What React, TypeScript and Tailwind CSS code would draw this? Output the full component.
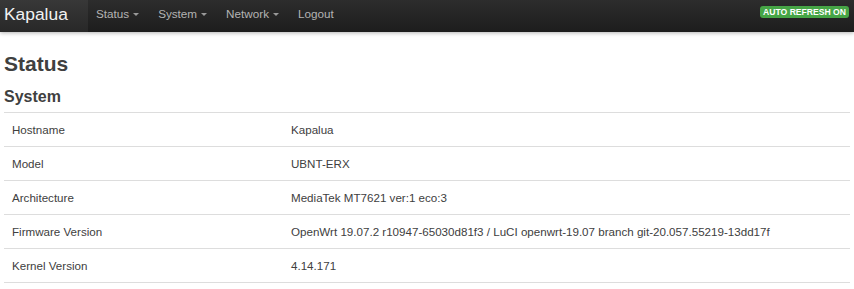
import { ReactNode } from 'react';

const rows: [string, string][] = [
  ['Hostname', 'Kapalua'],
  ['Model', 'UBNT-ERX'],
  ['Architecture', 'MediaTek MT7621 ver:1 eco:3'],
  ['Firmware Version', 'OpenWrt 19.07.2 r10947-65030d81f3 / LuCI openwrt-19.07 branch git-20.057.55219-13dd17f'],
  ['Kernel Version', '4.14.171'],
];

function NavLink({ children, caret = false }: { children: ReactNode; caret?: boolean }) {
  return (
    <a className="flex items-center h-full pb-[4px] pl-[8px] pr-[11px] text-[11.7px] text-[#b3b3b3] cursor-pointer">
      {children}
      {caret && (
        <span className="ml-[4px] mt-[1px] w-0 h-0 border-l-[3px] border-r-[3px] border-t-[3.5px] border-l-transparent border-r-transparent border-t-[#999]" />
      )}
    </a>
  );
}

export default function App() {
  return (
    <div className="min-h-screen bg-white font-['Liberation_Sans',Arial,sans-serif] text-[#404040]">
      {/* Top bar */}
      <nav className="flex items-center h-[32px] bg-gradient-to-b from-[#2d2d2d] to-[#1d1d1d] shadow-[0_1px_4px_rgba(0,0,0,0.3)]">
        <a className="flex items-center h-full w-[88px] pb-[4px] pl-[4px] text-[17.4px] text-[#f2f2f2] bg-gradient-to-b from-[#383838] to-[#282828]">
          Kapalua
        </a>
        <NavLink caret>Status</NavLink>
        <NavLink caret>System</NavLink>
        <NavLink caret>Network</NavLink>
        <NavLink>Logout</NavLink>
        <span className="ml-auto mr-[5px] mb-[9px] px-[3px] h-[12px] leading-[12px] rounded-[3px] bg-[#46a546] text-white text-[8.6px] font-bold">
          AUTO REFRESH ON
        </span>
      </nav>

      {/* Content */}
      <div className="px-[4px]">
        <h2 className="mt-[20px] text-[21px] leading-[24px] font-bold">Status</h2>
        <h3 className="mt-[12px] text-[16px] leading-[18px] font-bold">System</h3>
        <div className="mt-[6px] w-[846px] border-b border-[#ddd]">
          {rows.map(([label, value]) => (
            <div key={label} className="flex items-center h-[34px] border-t border-[#ddd] text-[11.6px]">
              <div className="w-[279px] pl-[8px]">{label}</div>
              <div className="pl-[8px]">{value}</div>
            </div>
          ))}
        </div>
      </div>
    </div>
  );
}
